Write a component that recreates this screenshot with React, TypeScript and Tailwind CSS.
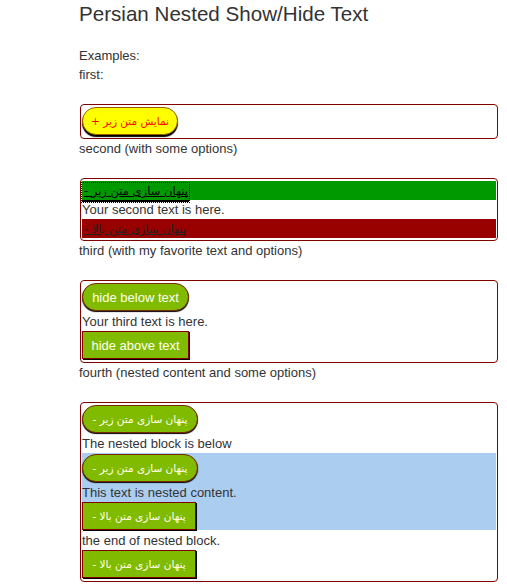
import React from 'react';

const fa = "font-['DejaVu_Sans',sans-serif] text-[10.5px]";
const pill = "flex items-center justify-center h-[28px] mb-[1px] rounded-full border border-[#7a2a00] bg-[#80bb00] text-[#fffff0] shadow-[0_1px_1px_#000] whitespace-nowrap";
const square = "flex items-center justify-center h-[28px] mb-[1px] border border-[#800000] bg-[#80bb00] text-[#fffff0] shadow-[1px_1px_0_#000] whitespace-nowrap";
const box = "ml-[1px] w-[418px] border border-[#800000] rounded-[4px] px-[1px] py-[2px]";

const App: React.FC = () => {
    return (
        <div className="min-h-screen bg-white pl-[79px] text-[13px] leading-[19px] text-[#333] font-['Liberation_Sans','DejaVu_Sans',sans-serif]">
            <h1 className="h-[46px] pt-[1px] text-[20.6px] leading-[25px] font-normal">Persian Nested Show/Hide Text</h1>
            <div>Examples:</div>
            <div>first:</div>

            {/* first */}
            <div className={`mt-[20px] ${box}`}>
                <div className={`flex items-center justify-center w-[96px] h-[28px] mb-[1px] rounded-full border border-[#9a5a00] bg-[#ffff00] text-[#ff0000] shadow-[0_2px_1px_#000] whitespace-nowrap ${fa}`} dir="rtl">
                    نمایش متن زیر +
                </div>
            </div>
            <div>second (with some options)</div>

            {/* second */}
            <div className={`mt-[20px] ${box}`}>
                <div className="h-[19px] bg-[#009900]">
                    <span dir="rtl" className={`inline-block h-[19px] pl-[2px] pr-[1px] text-black underline outline-1 outline-dotted outline-black border-b-2 border-black leading-[17px] ${fa} text-[11.5px]`}>پنهان سازی متن زیر -</span>
                </div>
                <div className="h-[19px]">Your second text is here.</div>
                <div className="h-[19px] bg-[#990000]">
                    <span dir="rtl" className={`inline-block pl-[2px] text-[#222] underline ${fa} text-[11.5px]`}>پنهان سازی متن بالا -</span>
                </div>
            </div>
            <div>third (with my favorite text and options)</div>

            {/* third */}
            <div className={`mt-[20px] ${box}`}>
                <div className={`${pill} w-[107px]`}>hide below text</div>
                <div>Your third text is here.</div>
                <div className={`${square} w-[107px]`}>hide above text</div>
            </div>
            <div>fourth (nested content and some options)</div>

            {/* fourth */}
            <div className={`mt-[20px] ${box}`}>
                <div className={`${pill} w-[116px] ${fa}`} dir="rtl">پنهان سازی متن زیر -</div>
                <div>The nested block is below</div>
                <div className="bg-[#abcdef] pt-[1px]">
                    <div className={`${pill} w-[116px] ${fa}`} dir="rtl">پنهان سازی متن زیر -</div>
                    <div>This text is nested content.</div>
                    <div className={`${square} w-[114px] ${fa}`} dir="rtl">پنهان سازی متن بالا -</div>
                </div>
                <div>the end of nested block.</div>
                <div className={`${square} w-[114px] ${fa}`} dir="rtl">پنهان سازی متن بالا -</div>
            </div>
        </div>
    );
};

export default App;
